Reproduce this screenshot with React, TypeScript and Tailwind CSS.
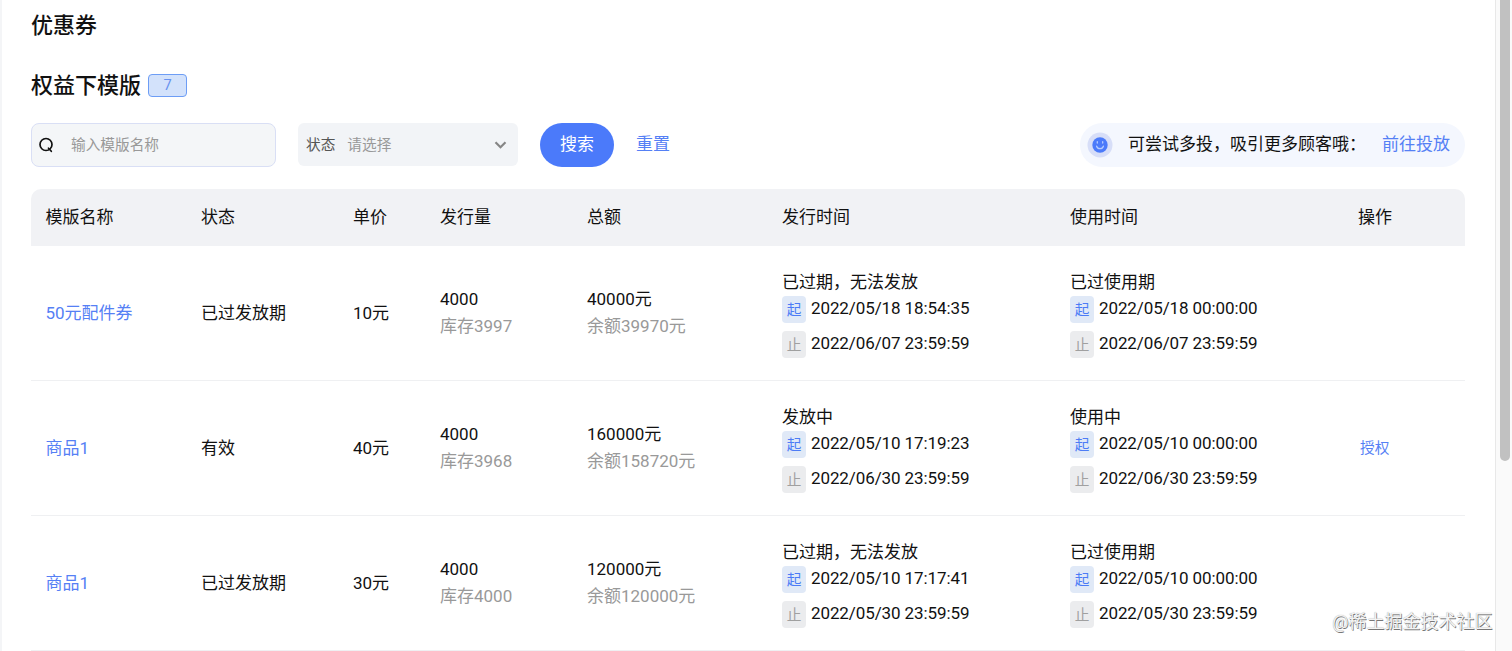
import React from "react";

type Row = {
  name: string;
  status: string;
  price: string;
  stock: string;
  total: string;
  balance: string;
  issue: [string, string, string];
  use: [string, string, string];
  action?: string;
};

const columns = ["模版名称", "状态", "单价", "发行量", "总额", "发行时间", "使用时间", "操作"];

const rows: Row[] = [
  {
    name: "50元配件券", status: "已过发放期", price: "10元", stock: "库存3997", total: "40000元", balance: "余额39970元",
    issue: ["已过期，无法发放", "2022/05/18 18:54:35", "2022/06/07 23:59:59"],
    use: ["已过使用期", "2022/05/18 00:00:00", "2022/06/07 23:59:59"],
  },
  {
    name: "商品1", status: "有效", price: "40元", stock: "库存3968", total: "160000元", balance: "余额158720元",
    issue: ["发放中", "2022/05/10 17:19:23", "2022/06/30 23:59:59"],
    use: ["使用中", "2022/05/10 00:00:00", "2022/06/30 23:59:59"],
    action: "授权",
  },
  {
    name: "商品1", status: "已过发放期", price: "30元", stock: "库存4000", total: "120000元", balance: "余额120000元",
    issue: ["已过期，无法发放", "2022/05/10 17:17:41", "2022/05/30 23:59:59"],
    use: ["已过使用期", "2022/05/10 00:00:00", "2022/05/30 23:59:59"],
  },
];

const grid = "grid grid-cols-[155.5px_152px_87px_147px_195px_288px_288px_1fr] items-center pl-[14.5px]";

function Period({ value }: { value: [string, string, string] }) {
  return (
    <div>
      <div className="h-7 leading-[29px]">{value[0]}</div>
      <div className="flex h-[27px] items-center gap-[5px]">
        <span className="flex h-[27px] w-6 items-center justify-center rounded-[4px] bg-[#e0e9f7] text-[14.67px] text-[#4d7cf6]">起</span>
        <span className="pb-0.5 leading-[25px] tracking-[-0.1px]">{value[1]}</span>
      </div>
      <div className="mt-2 flex h-[27px] items-center gap-[5px]">
        <span className="flex h-[27px] w-6 items-center justify-center rounded-[4px] bg-[#ebecee] text-[14.67px] text-[#a0a0a0]">止</span>
        <span className="pb-0.5 leading-[25px] tracking-[-0.1px]">{value[2]}</span>
      </div>
    </div>
  );
}

function Amount({ main, sub }: { main: string; sub: string }) {
  return (
    <div className="leading-[27px]">
      <div>{main}</div>
      <div className="text-[#999]">{sub}</div>
    </div>
  );
}

export default function App() {
  return (
    <div className="relative flex h-[651px] w-full overflow-hidden whitespace-nowrap bg-white font-['Roboto','Noto_Sans_CJK_SC',sans-serif] text-[17px] text-[#111]">
      <main className="flex min-w-0 flex-1 flex-col border-l-2 border-[#f4f5f7] pl-[29px] pr-[30px]">
        <h1 className="mt-2.5 h-8 text-[22px] font-medium leading-8">优惠券</h1>
        <div className="mt-[26px] flex h-[34px] items-center gap-[7px]">
          <h2 className="pt-0.5 text-[22px] font-medium leading-8">权益下模版</h2>
          <span className="flex h-[23px] w-[39px] items-center justify-center rounded-[4px] border border-[#6d9df5] bg-[#d3e2fb] text-[14.67px] text-[#6792f0]">7</span>
        </div>

        <div className="mt-5 flex h-[45px] items-center">
          <div className="flex h-11 w-[245px] items-center rounded-[8px] border border-[#d9dff5] bg-[#f4f6f8] pl-[7px]">
            <svg width="15" height="16" viewBox="0 0 15 16" fill="none" stroke="#111" strokeWidth="1.7">
              <circle cx="7" cy="7.5" r="6" />
              <path d="M9.5 11.2 12.3 14.3" strokeLinecap="round" />
            </svg>
            <span className="ml-[17px] text-[14.67px] text-[#999]">输入模版名称</span>
          </div>
          <div className="ml-[22px] flex h-[43px] w-[220px] items-center rounded-[6px] bg-[#f2f4f7] pl-2 pr-[11px] text-[14.67px]">
            <span className="text-[#555]">状态</span>
            <span className="ml-3 text-[#999]">请选择</span>
            <svg className="ml-auto" width="13" height="10" viewBox="0 0 13 10" fill="none" stroke="#868686" strokeWidth="2.2">
              <path d="M1.5 2.2 6.5 7.2 11.5 2.2" />
            </svg>
          </div>
          <button className="ml-[22px] h-11 w-[74px] rounded-full bg-[#4b7afa] text-white">搜索</button>
          <button className="ml-[22px] pt-px text-[#5580f5]">重置</button>
          <div className="ml-auto flex h-11 items-center rounded-full bg-[#f4f7fe] pl-[7px] pr-[15px]">
            <svg width="26" height="26" viewBox="0 0 26 26">
              <circle cx="13" cy="13" r="12.5" fill="#d7def8" />
              <circle cx="13" cy="13" r="7.7" fill="#4b7afa" />
              <path d="M10.3 9.7v1.4M15.7 9.7v1.4M9.6 14.2a3.6 3.6 0 0 0 6.8 0" fill="none" stroke="#b4caff" strokeWidth="1.3" strokeLinecap="round" />
            </svg>
            <span className="ml-[15px]">可尝试多投，吸引更多顾客哦：</span>
            <button className="ml-4 text-[#5580f5]">前往投放</button>
          </div>
        </div>

        <section className="mt-[22px]">
          <div className={`${grid} h-[57px] rounded-t-[10px] bg-[#f1f2f5]`}>
            {columns.map((c) => <div key={c} className="pb-0.5 leading-6">{c}</div>)}
          </div>
          {rows.map((r, i) => (
            <div key={i} className={`${grid} h-[135px] border-b border-[#eff0f2]`}>
              <div className="pt-0.5 text-[#5580f5]">{r.name}</div>
              <div className="pt-0.5">{r.status}</div>
              <div className="pt-0.5">{r.price}</div>
              <Amount main="4000" sub={r.stock} />
              <Amount main={r.total} sub={r.balance} />
              <Period value={r.issue} />
              <Period value={r.use} />
              <div className="pl-0.5 text-[14.67px] text-[#5580f5]">{r.action}</div>
            </div>
          ))}
        </section>
      </main>
      <aside className="w-[17px] border-l border-[#e8e8e8] bg-[#fafafa] pl-1">
        <div className="h-[461px] w-[10px] rounded-b-full bg-[#c1c1c1]" />
      </aside>
      <div className="absolute right-[19.5px] top-[610px] text-[18px] leading-6 text-[#f4f4f4] [text-shadow:0.7px_0.7px_0.6px_#777,0_0_1px_#999]">@稀土掘金技术社区</div>
    </div>
  );
}
